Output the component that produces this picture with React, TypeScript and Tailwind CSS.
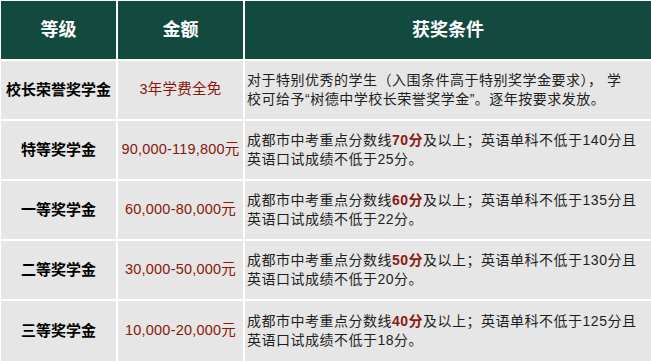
import React from "react";

interface Row {
  level: string;
  amount: string;
  line1: React.ReactNode;
  line2: React.ReactNode;
}

const Score = ({ children }: { children: React.ReactNode }) => (
  <span className="font-bold text-[#8c1a10]">{children}</span>
);

const rows: Row[] = [
  {
    level: "校长荣誉奖学金",
    amount: "3年学费全免",
    line1: "对于特别优秀的学生（入围条件高于特别奖学金要求）， 学",
    line2: "校可给予“树德中学校长荣誉奖学金”。逐年按要求发放。",
  },
  {
    level: "特等奖学金",
    amount: "90,000-119,800元",
    line1: (
      <>
        成都市中考重点分数线<Score>70分</Score>及以上；英语单科不低于140分且
      </>
    ),
    line2: "英语口试成绩不低于25分。",
  },
  {
    level: "一等奖学金",
    amount: "60,000-80,000元",
    line1: (
      <>
        成都市中考重点分数线<Score>60分</Score>及以上；英语单科不低于135分且
      </>
    ),
    line2: "英语口试成绩不低于22分。",
  },
  {
    level: "二等奖学金",
    amount: "30,000-50,000元",
    line1: (
      <>
        成都市中考重点分数线<Score>50分</Score>及以上；英语单科不低于130分且
      </>
    ),
    line2: "英语口试成绩不低于20分。",
  },
  {
    level: "三等奖学金",
    amount: "10,000-20,000元",
    line1: (
      <>
        成都市中考重点分数线<Score>40分</Score>及以上；英语单科不低于125分且
      </>
    ),
    line2: "英语口试成绩不低于18分。",
  },
];

const App: React.FC = () => {
  return (
    <div
      className="w-[651px] h-[361px] overflow-hidden bg-white pt-[1px] pl-[1px] grid grid-cols-[115px_125px_1fr] grid-rows-[58px_58px_58px_58px_58px_1fr] gap-[2px]"
      style={{ fontFamily: '"Liberation Sans", "Noto Sans CJK SC", sans-serif' }}
    >
      <div className="bg-[#134a40] text-white font-bold text-[18px] flex items-center justify-center">
        等级
      </div>
      <div className="bg-[#134a40] text-white font-bold text-[18px] flex items-center justify-center">
        金额
      </div>
      <div className="bg-[#134a40] text-white font-bold text-[18px] flex items-center justify-center">
        获奖条件
      </div>
      {rows.map((r) => (
        <React.Fragment key={r.level}>
          <div className="bg-[#e6e6e6] text-black font-bold text-[15px] flex items-center justify-center">
            {r.level}
          </div>
          <div className="bg-[#e6e6e6] text-[#8a1708] text-[14.5px] tracking-[0.2px] flex items-center justify-center">
            {r.amount}
          </div>
          <div className="bg-[#e6e6e6] text-[#1e1e1e] text-[14px] tracking-[0.5px] leading-[19px] flex flex-col justify-center pl-[2px] whitespace-nowrap">
            <div>{r.line1}</div>
            <div>{r.line2}</div>
          </div>
        </React.Fragment>
      ))}
    </div>
  );
};

export default App;
